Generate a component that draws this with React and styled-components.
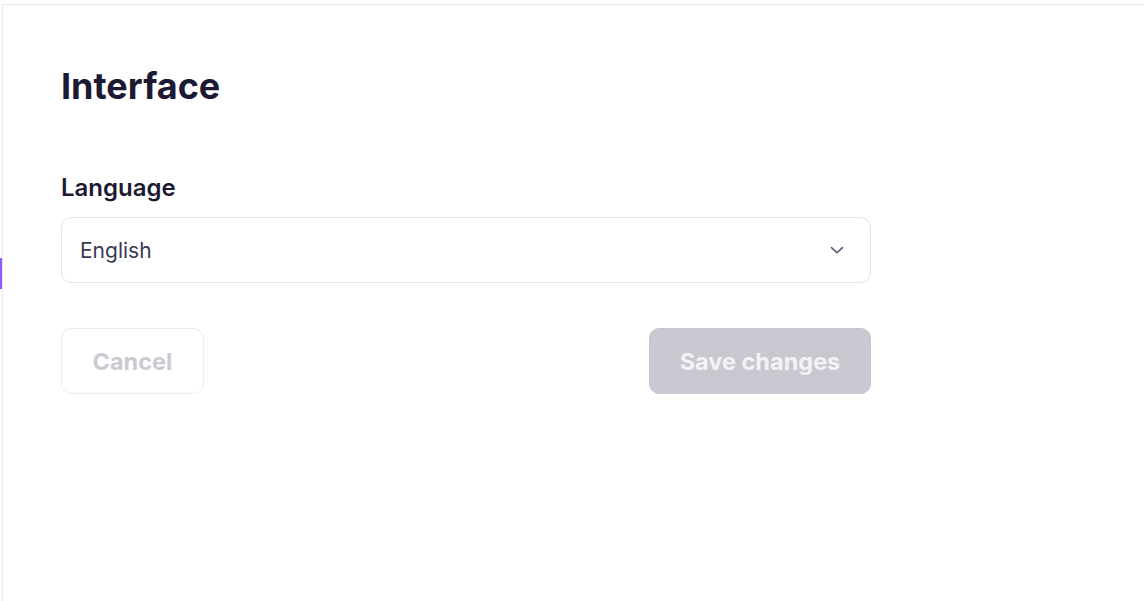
import React from "react";
import styled, { createGlobalStyle } from "styled-components";

const GlobalStyle = createGlobalStyle`
  html, body {
    margin: 0;
    padding: 0;
    background: #ffffff;
    font-family: Inter, "Noto Sans", sans-serif;
  }
`;

const Page = styled.div`
  display: flex;
  height: 601px;
  overflow: hidden;
  padding-top: 4px;
  box-sizing: border-box;
`;

const Rail = styled.div`
  width: 2px;
  position: relative;
  flex-shrink: 0;
`;

const ActiveMark = styled.div`
  position: absolute;
  left: 0;
  top: 254px;
  width: 2px;
  height: 31px;
  background: #8b5cf6;
`;

const Panel = styled.main`
  flex: 1;
  border-top: 1px solid #ebebee;
  border-left: 1px solid #ebebee;
  padding: 59px 0 0 58px;
  box-sizing: border-box;
`;

const Content = styled.div`
  width: 810px;
`;

const Title = styled.h1`
  margin: 0;
  font-size: 36px;
  line-height: 44px;
  font-weight: 700;
  color: #1c1a33;
`;

const Label = styled.label`
  display: block;
  margin-top: 66px;
  font-size: 24px;
  line-height: 28px;
  font-weight: 600;
  color: #1c1a33;
`;

const Select = styled.div`
  margin-top: 15px;
  height: 66px;
  box-sizing: border-box;
  border: 1px solid #e4e4ea;
  border-radius: 10px;
  display: flex;
  align-items: center;
  justify-content: space-between;
  padding: 0 22px 0 18px;
  font-size: 21px;
  color: #3b3850;
`;

const Actions = styled.div`
  margin-top: 45px;
  display: flex;
  justify-content: space-between;
`;

const Button = styled.button`
  height: 66px;
  box-sizing: border-box;
  border-radius: 10px;
  font-family: Inter, "Noto Sans", sans-serif;
  font-size: 23.5px;
  font-weight: 700;
  width: ${(p) => p.$width}px;
  padding: 0;
  border: 1px solid ${(p) => (p.$primary ? "#c9c8d1" : "#ececf0")};
  background: ${(p) => (p.$primary ? "#c9c8d1" : "#ffffff")};
  color: ${(p) => (p.$primary ? "#f3f3f6" : "#cbcad3")};
  cursor: not-allowed;
`;

const Chevron = () => (
  <svg width="22" height="22" viewBox="0 0 24 24" fill="none" stroke="#5a586e" strokeWidth="1.8" strokeLinecap="round" strokeLinejoin="round">
    <path d="M6 9.5l6 5.5 6-5.5" />
  </svg>
);

export default function App() {
  return (
    <>
      <GlobalStyle />
      <Page>
        <Rail>
          <ActiveMark />
        </Rail>
        <Panel>
          <Content>
            <Title>Interface</Title>
            <Label>Language</Label>
            <Select>
              <span>English</span>
              <Chevron />
            </Select>
            <Actions>
              <Button $width={143} disabled>Cancel</Button>
              <Button $width={222} $primary disabled>Save changes</Button>
            </Actions>
          </Content>
        </Panel>
      </Page>
    </>
  );
}
